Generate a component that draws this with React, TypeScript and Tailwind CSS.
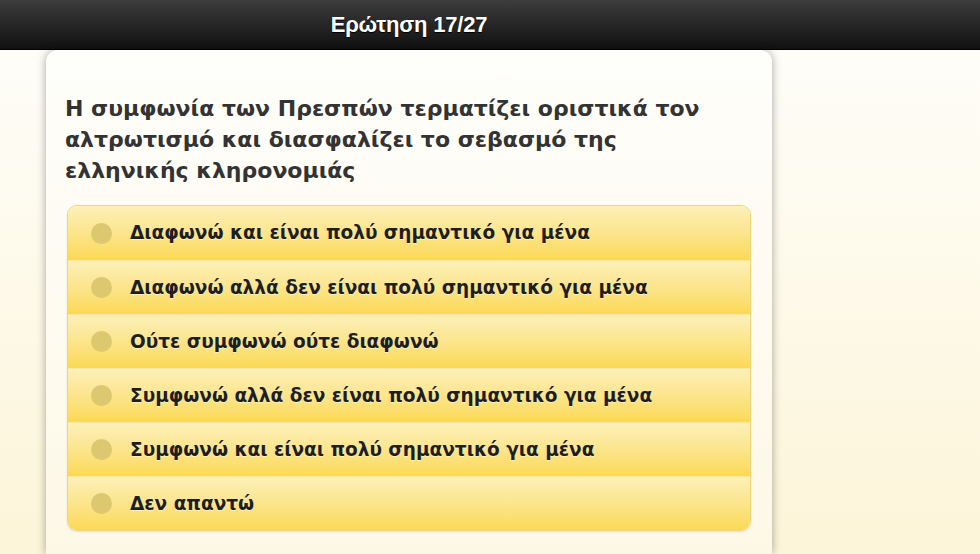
const options = [
  "Διαφωνώ και είναι πολύ σημαντικό για μένα",
  "Διαφωνώ αλλά δεν είναι πολύ σημαντικό για μένα",
  "Ούτε συμφωνώ ούτε διαφωνώ",
  "Συμφωνώ αλλά δεν είναι πολύ σημαντικό για μένα",
  "Συμφωνώ και είναι πολύ σημαντικό για μένα",
  "Δεν απαντώ",
];

export default function App() {
  return (
    <div className="h-[554px] overflow-hidden bg-gradient-to-b from-[#fefefb] to-[#fdf5d9] font-['DejaVu_Sans',sans-serif]">
      <header className="h-[50px] bg-gradient-to-b from-[#3d3d3d] to-[#111111] border-b border-[#000]">
        <div className="ml-[46px] w-[726px] h-full flex items-center justify-center">
          <h1 className="font-['Liberation_Sans',Arial,sans-serif] text-white font-bold text-[22px] tracking-[-0.2px] [text-shadow:0_1px_1px_#000]">
            Ερώτηση 17/27
          </h1>
        </div>
      </header>

      <main className="ml-[46px] w-[726px] h-[504px] rounded-t-[12px] bg-gradient-to-b from-[#fefefb] to-[#fdf8e6] shadow-[0_0_10px_rgba(0,0,0,0.35)] px-[21px] pt-[43px]">
        <h2 className="-ml-[2px] font-bold text-[22px] leading-[31px] text-[#333] pr-[30px]">
          Η συμφωνία των Πρεσπών τερματίζει οριστικά τον αλτρωτισμό και διασφαλίζει το σεβασμό της ελληνικής κληρονομιάς
        </h2>

        <ul className="mt-[19px] rounded-[10px] border border-[#edd679] overflow-hidden shadow-[0_1px_2px_rgba(0,0,0,0.1)]">
          {options.map((label, i) => (
            <li
              key={label}
              className={`h-[54px] flex items-center pl-[23px] bg-gradient-to-b from-[#fdf0b9] to-[#fbd952] ${
                i > 0 ? "border-t border-[#fbe7a2]" : ""
              }`}
            >
              <span className="w-[21px] h-[21px] rounded-full bg-[#dcc86e] shrink-0" />
              <span className="ml-[18px] font-bold text-[18.5px] text-[#1e1e1e] [text-shadow:0_1px_0_rgba(255,255,255,0.5)]">
                {label}
              </span>
            </li>
          ))}
        </ul>
      </main>
    </div>
  );
}
